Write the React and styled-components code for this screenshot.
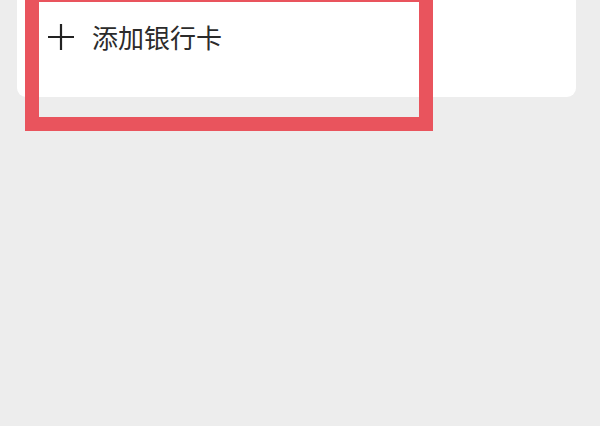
import styled, { createGlobalStyle } from 'styled-components';

const GlobalStyle = createGlobalStyle`
	html, body {
		margin: 0;
		padding: 0;
		background: #ededed;
	}
	* {
		box-sizing: border-box;
	}
`;

const Page = styled.div`
	position: relative;
	min-height: 426px;
	padding: 0 24px 0 17px;
	background: #ededed;
	overflow: hidden;
	font-family: "Noto Sans CJK SC", "Noto Sans", sans-serif;
`;

const Card = styled.div`
	background: #ffffff;
	height: 97px;
	border-radius: 0 0 9px 9px;
`;

const AddRow = styled.div`
	display: flex;
	align-items: center;
	gap: 17px;
	height: 74px;
	padding-left: 30px;
	cursor: pointer;
`;

const PlusIcon = styled.svg`
	width: 28px;
	height: 28px;
	flex-shrink: 0;
	color: #222222;
`;

const Label = styled.span`
	font-size: 26px;
	line-height: 1;
	color: #2b2b2b;
	letter-spacing: 0;
`;

// annotation frame drawn over the screenshot
const Highlight = styled.div`
	position: absolute;
	left: 25px;
	top: -12px;
	width: 408px;
	height: 143px;
	border: 14px solid #e9545d;
	pointer-events: none;
`;

export default function App() {
	return (
		<>
			<GlobalStyle />
			<Page>
				<Card>
					<AddRow>
						<PlusIcon viewBox="0 0 28 28" fill="none">
							<path d="M14 1v26M1 14h26" stroke="currentColor" strokeWidth="2.2" />
						</PlusIcon>
						<Label>添加银行卡</Label>
					</AddRow>
				</Card>
				<Highlight />
			</Page>
		</>
	);
}
